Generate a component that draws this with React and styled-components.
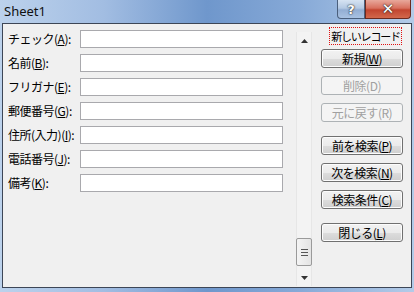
import React from 'react';
import styled, { createGlobalStyle } from 'styled-components';

const Global = createGlobalStyle`
  html, body { margin: 0; padding: 0; background: #6f97cb; }
  body { font-family: "Noto Sans CJK JP", "Noto Sans", sans-serif; }
`;

const Window = styled.div`
  width: 414px;
  height: 292px;
  box-sizing: border-box;
  display: flex;
  flex-direction: column;
  padding: 0 2px 4px 2px;
  background: linear-gradient(to right, #bcd2ec 0%, #a2bde2 25%, #6f97cc 50%, #86a9d7 72%, #b3cbe8 100%);
`;

const TitleBar = styled.div`
  height: 23px;
  display: flex;
  align-items: flex-start;
  justify-content: space-between;
`;

const Title = styled.span`
  font-family: "Noto Sans", "DejaVu Sans", sans-serif;
  font-size: 13px;
  line-height: 22px;
  color: #111;
  padding-left: 2px;
`;

const Caption = styled.div`
  display: flex;
  margin-right: 1px;
`;

const CapButton = styled.div`
  width: ${p => p.$w}px;
  height: 19px;
  box-sizing: border-box;
  display: flex;
  align-items: center;
  justify-content: center;
  border: 1px solid ${p => (p.$close ? '#6b2a20' : '#4a5f7c')};
  border-top: none;
  border-radius: ${p => (p.$close ? '0 0 4px 0' : '0 0 0 4px')};
  background: ${p =>
    p.$close
      ? 'linear-gradient(#e8a89b 0%, #d8705e 45%, #c24530 55%, #d2684c 100%)'
      : 'linear-gradient(#d6e3f2 0%, #b4c9e3 45%, #93aed3 55%, #a9c2e2 100%)'};
  color: #fff;
  font-family: "DejaVu Sans", sans-serif;
  font-weight: bold;
  font-size: ${p => (p.$close ? 15 : 13)}px;
  text-shadow: 0 0 2px #222, 0 0 1px #222;
`;

const Client = styled.div`
  flex: 1;
  display: flex;
  border: 1px solid #3d4656;
  background: #f0f0f0;
  font-size: 12px;
  color: #000;
`;

const Form = styled.div`
  display: flex;
  flex-direction: column;
  gap: 6px;
  padding: 6px 0 0 5px;
`;

const Row = styled.div`
  display: flex;
  align-items: center;
  height: 18px;
`;

const Label = styled.label`
  width: 72px;
  font-size: 12px;
  line-height: 18px;
  white-space: nowrap;
  letter-spacing: -0.5px;
  u { text-decoration: underline; text-underline-offset: 1px; }
`;

const Input = styled.div`
  width: 203px;
  height: 18px;
  box-sizing: border-box;
  border: 1px solid #a9a9ad;
  background: #fff;
`;

const ScrollBar = styled.div`
  width: 16px;
  margin: 8px 0 1px 13px;
  box-sizing: border-box;
  display: flex;
  flex-direction: column;
  align-items: center;
  border-left: 1px solid #e6e6e6;
  border-right: 1px solid #e6e6e6;
  background: #f3f3f3;
`;

const Arrow = styled.div`
  height: 17px;
  width: 100%;
  display: flex;
  align-items: center;
  justify-content: center;
`;

const Track = styled.div`
  flex: 1;
  width: 100%;
  display: flex;
  flex-direction: column;
  justify-content: flex-end;
  padding-bottom: 3px;
`;

const Thumb = styled.div`
  height: 28px;
  margin: 0 -1px;
  box-sizing: border-box;
  border: 1px solid #9a9a9a;
  border-radius: 2px;
  background: linear-gradient(to right, #f4f4f4, #e4e4e4);
  display: flex;
  align-items: center;
  justify-content: center;
`;

const Buttons = styled.div`
  display: flex;
  flex-direction: column;
  align-items: flex-end;
  width: 82px;
  padding: 3px 0 0 0;
  margin-left: 9px;
`;

const RecordLabel = styled.div`
  width: 73px;
  height: 18px;
  box-sizing: border-box;
  margin-right: 1px;
  border: 1px dotted #e01010;
  font-size: 11px;
  line-height: 16px;
  text-align: center;
  white-space: nowrap;
  letter-spacing: -1.2px;
`;

const Group = styled.div`
  display: flex;
  flex-direction: column;
  gap: 8px;
  margin-top: ${p => p.$top}px;
`;

const Button = styled.div`
  width: 82px;
  height: 19px;
  box-sizing: border-box;
  border: 1px solid ${p => (p.$disabled ? '#adb2b5' : '#707070')};
  border-radius: 3px;
  background: ${p =>
    p.$disabled
      ? '#f4f4f4'
      : 'linear-gradient(#f2f2f2 0%, #ebebeb 50%, #dddddd 51%, #cfcfcf 100%)'};
  box-shadow: inset 0 0 0 1px ${p => (p.$disabled ? '#f4f4f4' : '#fcfcfc')};
  color: ${p => (p.$disabled ? '#a0a0a0' : '#000')};
  font-size: 12px;
  line-height: 17px;
  text-align: center;
  white-space: nowrap;
  letter-spacing: -0.5px;
  u { text-decoration: underline; text-underline-offset: 1px; }
`;

const fields = [
  ['チェック', 'A'],
  ['名前', 'B'],
  ['フリガナ', 'E'],
  ['郵便番号', 'G'],
  ['住所(入力)', 'I'],
  ['電話番号', 'J'],
  ['備考', 'K'],
];

function Btn({ text, k, disabled }) {
  return (
    <Button $disabled={disabled}>
      {text}({disabled ? k : <u>{k}</u>})
    </Button>
  );
}

export default function App() {
  return (
    <>
      <Global />
      <Window>
        <TitleBar>
          <Title>Sheet1</Title>
          <Caption>
            <CapButton $w={28}>?</CapButton>
            <CapButton $w={46} $close>✕</CapButton>
          </Caption>
        </TitleBar>
        <Client>
          <Form>
            {fields.map(([name, key]) => (
              <Row key={key}>
                <Label>
                  {name}(<u>{key}</u>):
                </Label>
                <Input />
              </Row>
            ))}
          </Form>
          <ScrollBar>
            <Arrow>
              <svg width="7" height="4" viewBox="0 0 7 4">
                <path d="M0 4 L3.5 0 L7 4 Z" fill="#333" />
              </svg>
            </Arrow>
            <Track>
              <Thumb>
                <svg width="7" height="7" viewBox="0 0 7 7">
                  <path d="M0 0.5H7M0 3.5H7M0 6.5H7" stroke="#555" strokeWidth="1" />
                </svg>
              </Thumb>
            </Track>
            <Arrow>
              <svg width="7" height="4" viewBox="0 0 7 4">
                <path d="M0 0 L3.5 4 L7 0 Z" fill="#333" />
              </svg>
            </Arrow>
          </ScrollBar>
          <Buttons>
            <RecordLabel>新しいレコード</RecordLabel>
            <Group $top={4}>
              <Btn text="新規" k="W" />
              <Btn text="削除" k="D" disabled />
              <Btn text="元に戻す" k="R" disabled />
            </Group>
            <Group $top={14}>
              <Btn text="前を検索" k="P" />
              <Btn text="次を検索" k="N" />
              <Btn text="検索条件" k="C" />
            </Group>
            <Group $top={14}>
              <Btn text="閉じる" k="L" />
            </Group>
          </Buttons>
        </Client>
      </Window>
    </>
  );
}
